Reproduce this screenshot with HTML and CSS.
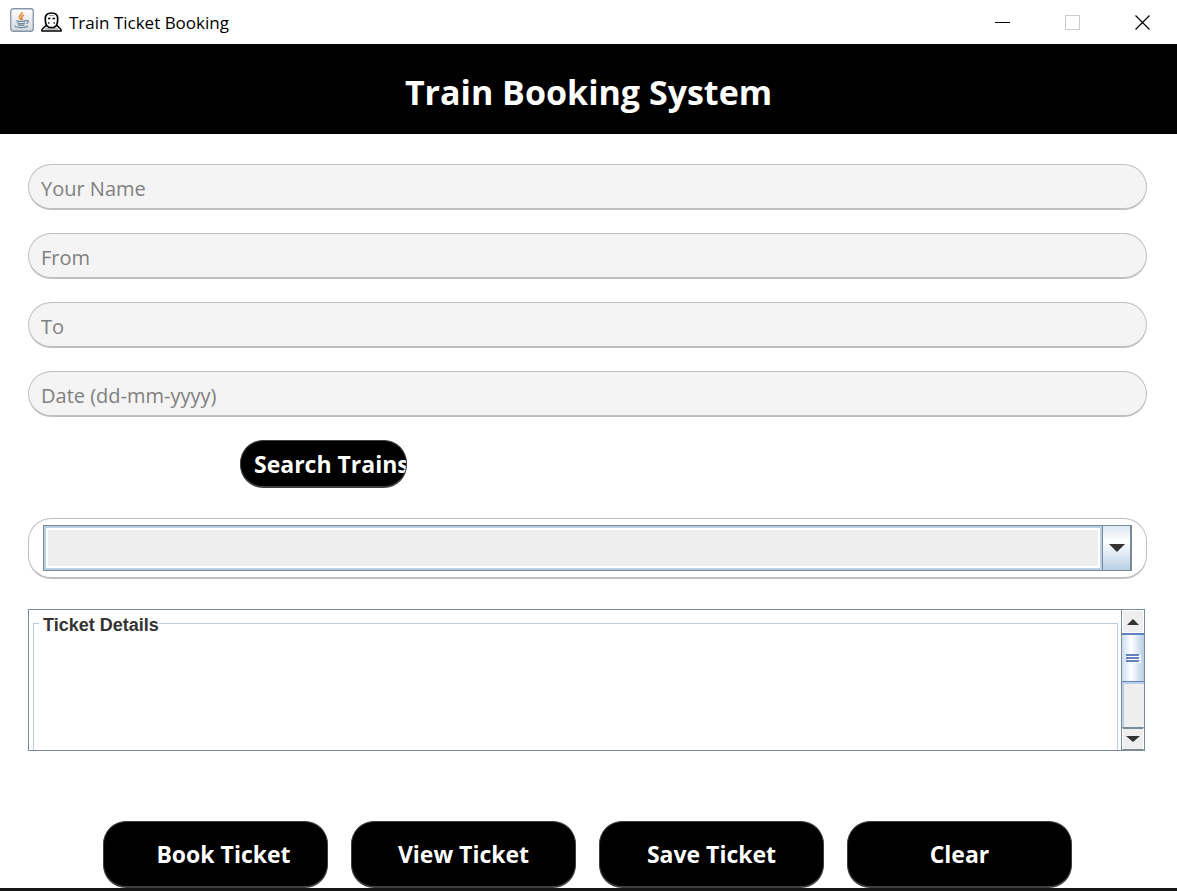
FILE: index.html
```html
<!DOCTYPE html>
<html lang="en">
<head>
<meta charset="utf-8">
<meta name="viewport" content="width=device-width, initial-scale=1">
<title>Train Ticket Booking</title>
<link rel="stylesheet" href="styles.css">
</head>
<body>
<div class="window">
  <header class="titlebar">
    <svg class="app-icon" width="24" height="24" viewBox="0 0 24 24" aria-hidden="true">
      <defs><linearGradient id="tile" x1="0" y1="0" x2="0" y2="1"><stop offset="0" stop-color="#fff"/><stop offset="1" stop-color="#d3d6da"/></linearGradient></defs>
      <rect x=".75" y=".75" width="22.5" height="22.5" rx="2.5" fill="url(#tile)" stroke="#8495a8" stroke-width="1.3"/>
      <path d="M12 4c1 2-3 3-2.700 5.200.1 1 1.500 1.700 1.800 2.800M14 7c-2 1-3 2-2 3.500.5.700 0 1.200-.3 1.700" fill="none" stroke="#ee8130" stroke-width="1.500"/>
      <path d="M7 12.500c-2 1.200 8 1.300 9 0M7.500 14.500c0 1.500 6 1.500 7.500.4M8 16.500c1 1.200 5 1.200 6.500.3M16 12.600c3-.5 3 2 .3 2.800M5.500 17.800c-2 2 10 2.500 12.500.2" fill="none" stroke="#6d8ba3" stroke-width="1.300"/>
    </svg>
    <svg class="train-icon" width="21" height="20" viewBox="0 0 21 20" aria-hidden="true">
      <path d="M5 13.500L1 17.500V19h19v-1.500L16 13.500z" fill="#fff" stroke="#000" stroke-width="1.500"/>
      <path d="M4 17h13" stroke="#777"/>
      <path d="M6 14C4.300 12 4.300 9 4.300 6.500 4.300 3 6.500 1 10.500 1s6.200 2 6.200 5.500c0 2.500 0 5.500-1.700 7.500L13 15.500H8z" fill="#fff" stroke="#000" stroke-width="1.700"/>
      <path d="M7 6.500h2.500M11.500 6.500H14" stroke="#000" stroke-width="1.300"/>
      <path d="M7 11h1.500M12.500 11H14" stroke="#222" stroke-width="1.300"/>
      <path d="M8 3.500h5" stroke="#999"/>
    </svg>
    <span class="window-title">Train Ticket Booking</span>
    <div class="window-controls">
      <button type="button" class="control" aria-label="Minimize"><svg width="15" height="15"><path d="M0 7.500h15" stroke="#000"/></svg></button>
      <button type="button" class="control" aria-label="Maximize" disabled><svg width="15" height="15"><rect x=".5" y=".5" width="14" height="14" fill="none" stroke="#ccc"/></svg></button>
      <button type="button" class="control" aria-label="Close"><svg width="15" height="15"><path d="M.5.500l14 14M14.500.500l-14 14" stroke="#000" stroke-width="1.200"/></svg></button>
    </div>
  </header>
  <div class="banner"><h1>Train Booking System</h1></div>
  <form class="booking">
    <div class="fields">
      <input class="field" type="text" placeholder="Your Name" aria-label="Your Name">
      <input class="field" type="text" placeholder="From" aria-label="From">
      <input class="field" type="text" placeholder="To" aria-label="To">
      <input class="field" type="text" placeholder="Date (dd-mm-yyyy)" aria-label="Date (dd-mm-yyyy)">
    </div>
    <div class="search-row"><button type="button" class="dark-button search">Search Trains</button></div>
    <div class="combo">
      <select class="combo-select" aria-label="Trains"></select>
      <span class="combo-arrow" aria-hidden="true"><svg width="16" height="8"><path d="M0 0h16L8 8z" fill="#333"/></svg></span>
    </div>
    <div class="details">
      <fieldset class="details-group">
        <legend><label for="ticket">Ticket Details</label></legend>
        <textarea id="ticket" class="details-text"></textarea>
      </fieldset>
      <div class="scrollbar">
        <button type="button" class="scroll-button" aria-label="Scroll up"><svg width="12" height="6"><path d="M0 6h12L6 0z" fill="#333"/></svg></button>
        <div class="thumb"><svg width="15" height="9"><path d="M2 2h13M2 5h13M2 8h13" stroke="#fff" stroke-width="2"/><path d="M0 1h13M0 4h13M0 7h13" stroke="#6382bf" stroke-width="2"/></svg></div>
        <div class="track"></div>
        <button type="button" class="scroll-button down" aria-label="Scroll down"><svg width="14" height="6"><path d="M0 0h14L7 6z" fill="#333"/></svg></button>
      </div>
    </div>
    <div class="actions">
      <button type="button" class="dark-button with-icon">Book Ticket</button>
      <button type="button" class="dark-button">View Ticket</button>
      <button type="button" class="dark-button">Save Ticket</button>
      <button type="button" class="dark-button">Clear</button>
    </div>
  </form>
</div>
</body>
</html>
```
FILE: styles.css
```css
* { box-sizing: border-box; }

body {
  margin: 0;
  background: #fff;
  font-family: "Open Sans", "Noto Sans", sans-serif;
}

.window { border-bottom: 3px solid #151515; }

.titlebar {
  display: flex;
  align-items: center;
  height: 44px;
  padding-left: 10px;
}
.app-icon { margin: 0 7px 4px 0; }
.train-icon { margin-right: 7px; }
.window-title { padding-top: 1px; font-size: 17px; line-height: 24px; }
.window-controls { display: flex; margin-left: auto; }
.control {
  display: flex;
  align-items: center;
  justify-content: center;
  width: 70px;
  height: 44px;
  padding: 0;
  border: 0;
  background: none;
}

.banner {
  padding: 23px 20px 17px;
  background: #000;
  color: #fff;
  text-align: center;
}
.banner h1 {
  margin: 0;
  font-size: 34px;
  line-height: 50px;
}

.booking { padding: 30px 30px 0 28px; }
.fields { display: grid; gap: 23px; }
.field {
  width: 100%;
  height: 46px;
  padding: 4px 12px 0;
  border: 1px solid #bfbfbf;
  border-bottom-width: 2px;
  border-radius: 23px;
  background: #f4f4f4;
  color: #333;
  font: 20px "Open Sans", "Noto Sans", sans-serif;
}
.field::placeholder { color: #808080; opacity: 1; }

.dark-button {
  overflow: hidden;
  padding: 0;
  border: 1px solid #404040;
  border-bottom-width: 2px;
  border-radius: 23px;
  background: #000;
  color: #fff;
  font: bold 23px/30px "Open Sans", "Noto Sans", sans-serif;
  white-space: nowrap;
}

.search-row { padding: 23px 0 30px 212px; }
.search {
  display: block;
  width: 167px;
  height: 48px;
  padding-left: 13px;
  text-align: left;
}

.combo {
  display: flex;
  padding: 6px 14px;
  border: 1px solid #bfbfbf;
  border-bottom-width: 2px;
  border-radius: 23px;
}
.combo-select {
  flex: 1;
  appearance: none;
  height: 46px;
  border: 1px solid #7a8a99;
  border-radius: 0;
  background: #eee;
  box-shadow: inset 0 0 0 2px #b8cfe5, inset 0 0 0 4px #fff;
  font-size: 18px;
}
.combo-arrow {
  display: flex;
  align-items: center;
  justify-content: center;
  width: 29px;
  border: 1px solid #7a8a99;
  border-width: 1px 2px 1px 0;
  background: linear-gradient(#dde8f3, #fff 35%, #b8cfe5);
}

.details {
  display: flex;
  height: 142px;
  margin: 30px 2px 70px 0;
  border: 1px solid #7a8a99;
  overflow: hidden;
}
.details-group {
  flex: 1;
  min-width: 0;
  height: 160px;
  margin: 3px 3px 0 4px;
  padding: 0 5px;
  border: 1px solid #b8cfe5;
}
.details-group legend {
  padding: 4px 0 0 4px;
  color: #333;
  font: bold 18px/16px "Liberation Sans", Arial, sans-serif;
}
.details-text {
  display: block;
  width: 100%;
  height: 120px;
  border: 0;
  outline: 0;
  resize: none;
  font: 18px "Liberation Sans", Arial, sans-serif;
}
.scrollbar {
  display: flex;
  flex-direction: column;
  width: 23px;
  border-left: 1px solid #7a8a99;
}
.scroll-button {
  display: flex;
  align-items: center;
  justify-content: center;
  height: 23px;
  padding: 0;
  border: 1px solid #fff;
  background: #eee;
}
.down { border-top: 2px solid #7a8a99; border-bottom: 1px solid #7a8a99; }
.thumb {
  display: flex;
  align-items: center;
  justify-content: center;
  height: 49px;
  border: 1px solid #6382bf;
  border-width: 2px 0 1px;
  background: linear-gradient(90deg, #c8dbee, #fff 40%, #b8cfe5);
}
.track {
  flex: 1;
  border-left: 2px solid #b8cfe5;
  border-top: 2px solid #b8cfe5;
  background: #eee;
}

.actions {
  display: grid;
  grid-template-columns: repeat(4, 225px);
  justify-content: center;
  gap: 23px;
}
.actions .dark-button { height: 67px; }
.with-icon { padding-left: 16px; }
```
